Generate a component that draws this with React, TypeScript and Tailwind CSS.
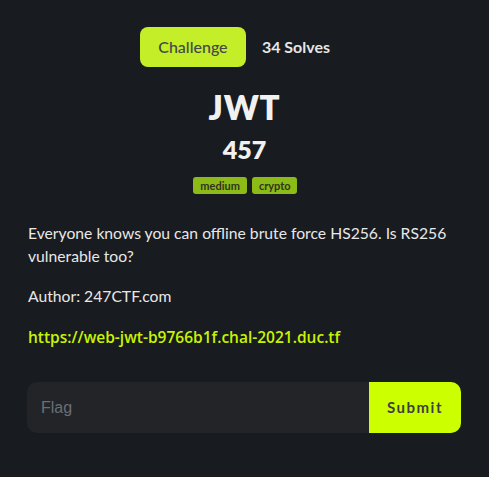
import React from "react";

export default function App() {
  const head = { fontFamily: "Lato, 'Open Sans', sans-serif" };
  return (
    <div className="w-[489px] h-[477px] bg-[#181b20] px-[27px] pt-[27px]" style={{ fontFamily: "Lato, sans-serif" }}>
      <div className="flex items-center justify-center gap-4 pr-[19px]">
        <div className="h-10 w-[106px] rounded-lg bg-[#c3ee28] flex items-center justify-center text-[16px] text-[#45474a] font-medium" style={head}>
          Challenge
        </div>
        <div className="text-[16px] font-bold text-[#e6e6e6]" style={head}>34 Solves</div>
      </div>
      <div className="flex flex-col items-center mt-[20px]">
        <div className="text-[33px] leading-[40px] font-extrabold text-[#f1f1f1] tracking-wide" style={head}>JWT</div>
        <div className="text-[25px] leading-[30px] font-extrabold text-[#f1f1f1] mt-[7px]" style={head}>457</div>
        <div className="flex gap-[5px] mt-[13px] pl-[1px]">
          <span className="h-[17px] px-[7.5px] rounded-[3px] bg-[#8cba16] text-[11px] leading-[17px] font-bold text-[#30341f]">medium</span>
          <span className="h-[17px] px-[6.5px] rounded-[3px] bg-[#8cba16] text-[11px] leading-[17px] font-bold text-[#30341f]">crypto</span>
        </div>
      </div>
      <div className="pl-[1px] mt-[28px] text-[15.7px] leading-[23px] text-[#e8e8e8]">
        Everyone knows you can offline brute force HS256. Is RS256 vulnerable too?
      </div>
      <div className="pl-[1px] mt-[17px] text-[15.7px] leading-[23px] text-[#e8e8e8]">Author: 247CTF.com</div>
      <div className="pl-[1px] mt-[18px] text-[15.5px] leading-[23px] text-[#c8f400] font-semibold" style={{ fontFamily: "'Open Sans', sans-serif" }}>
        https://web-jwt-b9766b1f.chal-2021.duc.tf
      </div>
      <div className="mt-[33px] flex h-[51px] w-[434px] rounded-[10px] overflow-hidden bg-[#232427]">
        <div className="flex-1 flex items-center pl-[14px] text-[16px] text-[#6b6f75]" style={{ fontFamily: "'Liberation Sans', Arial, sans-serif" }}>
          Flag
        </div>
        <div className="w-[92px] bg-[#ccff00] flex items-center justify-center text-[15px] font-bold tracking-[1.5px] text-[#3c3f44]" style={head}>
          Submit
        </div>
      </div>
    </div>
  );
}
